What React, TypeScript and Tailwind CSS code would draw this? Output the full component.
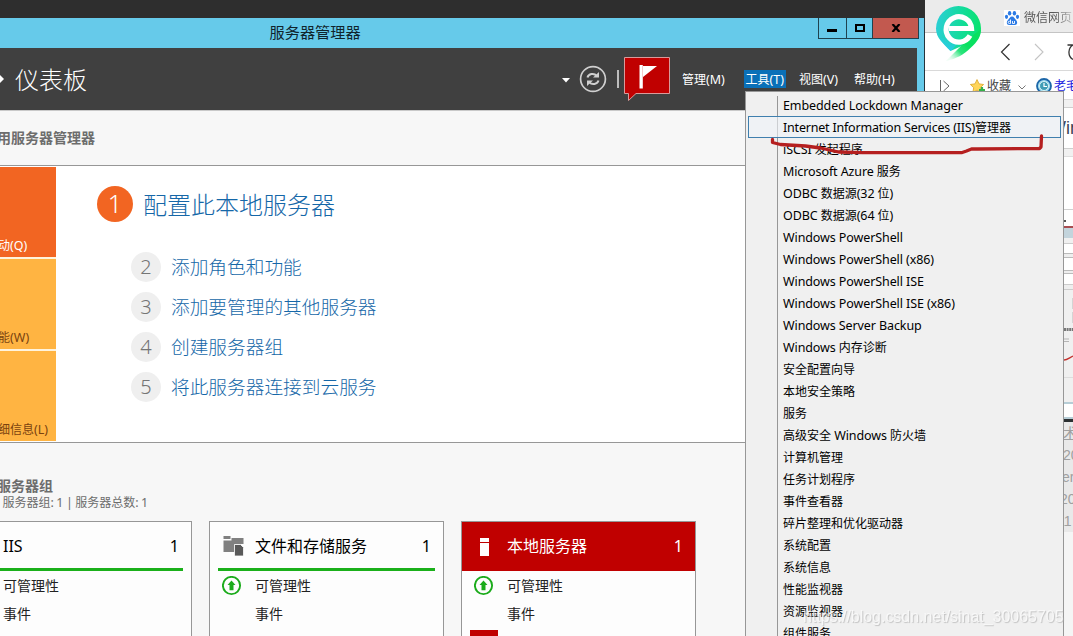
import clsx from 'clsx'

interface MenuEntry { label: string; active?: boolean }

const tools: MenuEntry[] = [
  { label: 'Embedded Lockdown Manager' },
  { label: 'Internet Information Services (IIS)管理器', active: true },
  { label: 'iSCSI 发起程序' },
  { label: 'Microsoft Azure 服务' },
  { label: 'ODBC 数据源(32 位)' },
  { label: 'ODBC 数据源(64 位)' },
  { label: 'Windows PowerShell' },
  { label: 'Windows PowerShell (x86)' },
  { label: 'Windows PowerShell ISE' },
  { label: 'Windows PowerShell ISE (x86)' },
  { label: 'Windows Server Backup' },
  { label: 'Windows 内存诊断' },
  { label: '安全配置向导' },
  { label: '本地安全策略' },
  { label: '服务' },
  { label: '高级安全 Windows 防火墙' },
  { label: '计算机管理' },
  { label: '任务计划程序' },
  { label: '事件查看器' },
  { label: '碎片整理和优化驱动器' },
  { label: '系统配置' },
  { label: '系统信息' },
  { label: '性能监视器' },
  { label: '资源监视器' },
  { label: '组件服务' },
]

const steps = ['添加角色和功能', '添加要管理的其他服务器', '创建服务器组', '将此服务器连接到云服务']

// latin runs are drawn a little larger than the 12px chinese glyphs
function Mixed({ text }: { text: string }) {
  return (
    <>
      {text.split(/([\u4e00-\u9fff]+)/).map((part, i) =>
        i % 2 ? <span key={i} className="text-[12px] tracking-normal">{part}</span> : <span key={i} className="text-[12.5px]">{part}</span>
      )}
    </>
  )
}

function TitleBar() {
  return (
    <div className="h-[30px] bg-[#66caea] flex shrink-0 border-r border-[#25343c]">
      <div className="w-[818px] pl-[269.5px] pt-[3px] text-[15.2px] leading-[23px] text-[#10242c]">服务器管理器</div>
      <div className="flex h-[21px] border-b border-l border-[#1f4350] text-black">
        <div className="w-[28px] border-r border-[#1f4350]"><div className="ml-[8px] mt-[11px] w-[10px] h-[3px] bg-black" /></div>
        <div className="w-[26px] border-r border-[#1f4350]"><div className="ml-[8px] mt-[6px] w-[10px] h-[8px] border-2 border-black" /></div>
        <div className="w-[46px] border-r border-[#1f4350] bg-[#c2594f]">
          <svg width="10" height="8" viewBox="0 0 10 8" className="ml-[18px] mt-[6px]"><path d="M1.5 0 8.5 8M8.5 0 1.5 8" stroke="#000" strokeWidth="2.2" /></svg>
        </div>
      </div>
    </div>
  )
}

function Header() {
  return (
    <div className="h-[63px] bg-[#404040] border-b border-[#c9c9c9] flex text-white w-[917px]">
      <svg width="4" height="8" viewBox="0 0 4 8" className="mt-[27px] shrink-0"><path d="M0 0 4 4 0 8z" fill="#fff" /></svg>
      <div className="ml-[11px] w-[547px] shrink-0 text-[24px] leading-[36px] mt-[14px] font-light">仪表板</div>
      <svg width="8" height="5" viewBox="0 0 8 5" className="mt-[30px] shrink-0"><path d="M0 0h8L4 4.5z" fill="#fff" /></svg>
      <svg width="28" height="28" viewBox="0 0 28 28" className="ml-[8.5px] mt-[17px] shrink-0" fill="none" stroke="#cfcfcf">
        <circle cx="14" cy="14" r="12.4" strokeWidth="1.7" />
        <path d="M8.5 12.5c1-3.6 6.3-5 9.3-1.6M19.5 15.5c-1 3.6-6.3 5-9.3 1.6" strokeWidth="2" />
        <path d="M20 7v5.5h-6zM8 21v-5.5h6z" fill="#cfcfcf" stroke="none" />
      </svg>
      <div className="ml-[10.5px] mt-[22px] w-[2px] h-[18px] bg-[#bdbdbd] shrink-0" />
      <svg width="47" height="46" viewBox="0 0 47 46" className="ml-[5px] mt-[9px] shrink-0">
        <path d="M.5.5h45v36H12L4.5 43.5V36.5H.5z" fill="#c00000" stroke="#d99a9a" />
        <path d="M15.500 8h3.300v23.500h-3.300zM19 9h14L19 20z" fill="#fff" />
      </svg>
      <div className="flex mt-[22px] ml-[11px] h-[18px] leading-[16px] whitespace-nowrap">
        <div className="w-[62px]"><Mixed text="管理(M)" /></div>
        <div className="w-[42px] pl-[1.5px] bg-[#0a70b8]"><Mixed text="工具(T)" /></div>
        <div className="w-[55px] ml-[13px]"><Mixed text="视图(V)" /></div>
        <div><Mixed text="帮助(H)" /></div>
      </div>
    </div>
  )
}

function QuickTile({ label, className }: { label: string; className: string }) {
  return (
    <div className={clsx('h-[90px] w-[58px] -ml-[2px] flex items-end leading-[18px] pb-[2px] whitespace-nowrap', className)}>
      <div><Mixed text={label} /></div>
    </div>
  )
}

function Welcome() {
  return (
    <div className="h-[278px] bg-white border-y border-[#979797] flex">
      <div className="w-[56px] mt-px flex flex-col gap-[2px] bg-[#fff3dc] h-[274px]">
        <QuickTile label="动(Q)" className="bg-[#f26522] text-white" />
        <QuickTile label="能(W)" className="bg-[#ffb442] text-[#7a4310]" />
        <QuickTile label="细信息(L)" className="bg-[#ffb442] text-[#7a4310]" />
      </div>
      <div className="pl-[41px] pt-[20px] text-[#1567a8] font-light">
        <div className="flex items-center">
          <div className="size-[36px] rounded-full bg-[#f26522] text-white text-[25px] leading-[35px] text-center">1</div>
          <div className="ml-[10px] pt-px text-[24px] leading-[35px]">配置此本地服务器</div>
        </div>
        <div className="mt-[30px] ml-[34px] flex flex-col gap-[10px]">
          {steps.map((s, i) => (
            <div key={s} className="flex items-center h-[30px]">
              <div className="size-[30px] rounded-full bg-[#efefef] text-[#757575] text-[20px] leading-[30px] text-center">{i + 2}</div>
              <div className="ml-[10px] text-[18.7px]">{s}</div>
            </div>
          ))}
        </div>
      </div>
    </div>
  )
}

function UpIcon() {
  return (
    <svg width="20" height="20" viewBox="0 0 20 20">
      <circle cx="9.5" cy="9.5" r="8.6" fill="none" stroke="#1bab1b" strokeWidth="1.9" />
      <path d="M9.5 4.500 13.500 9h-2v5.200h-4V9h-2z" fill="#1bab1b" />
    </svg>
  )
}

function ServerCard({ title, icon, alert }: { title: string; icon?: React.ReactNode; alert?: boolean }) {
  return (
    <div className="w-[235px] h-[130px] shrink-0 border border-[#979797] bg-[#fdfdfd] text-[#222]">
      <div className={clsx('h-[49px] flex items-center text-[16px]', alert ? 'bg-[#c00000] text-white' : 'text-black')}>
        <div className="w-[45px] pl-[13px]">{icon}</div>
        <div className="flex-1 pb-px">{title}</div>
        <div className="pr-[12px] pb-px">1</div>
      </div>
      {!alert && <div className="h-[3px] mx-[8px] bg-[#1bb01b] -mt-[3px]" />}
      <div className="flex text-[14px] leading-[28px] pt-px">
        <div className="w-[45px] pl-[12px] pt-[4px]"><UpIcon /></div>
        <div>
          <div>可管理性</div>
          <div>事件</div>
        </div>
      </div>
      {alert && <div className="ml-[8px] mt-[2px] w-[28px] h-[20px] bg-[#c00000]" />}
    </div>
  )
}

function ServerManager() {
  return (
    <div className="w-[925px] shrink-0 flex flex-col h-full">
      <div className="h-[18px] bg-[#2e2e2e] shrink-0" />
      <TitleBar />
      <div className="flex-1 bg-[#66caea] border-r border-[#25343c]">
        <div className="w-[917px] bg-[#f7f7f7] h-full">
          <Header />
          <div className="h-[54px] pt-[16px] text-[14px] leading-[22px] font-bold text-[#6d6d6d]"><div className="-ml-[3px]">用服务器管理器</div></div>
          <Welcome />
          <div className="pt-[33px] text-[#6d6d6d] h-[78px]">
            <div className="-ml-[3px] text-[14px] leading-[20px] font-bold">服务器组</div>
            <div className="pl-[2.5px] -mt-px leading-[13px] tracking-[-0.2px] [word-spacing:-0.4px]"><Mixed text="服务器组: 1 | 服务器总数: 1" /></div>
          </div>
          <div className="-ml-[43px] flex gap-[17px]">
            <ServerCard title="IIS" />
            <ServerCard
              title="文件和存储服务"
              icon={
                <svg width="22" height="22" viewBox="0 0 22 22" className="-mt-[2px]">
                  <path d="M.5 1h7v3h-7zM.5 5.500h8V3h12v6h-9v8h-11z" fill="#808080" />
                  <path d="M11.5 9.5h6l3 3v8.5h-9z" fill="#595959" stroke="#fdfdfd" strokeWidth=".8" />
                </svg>
              }
            />
            <ServerCard
              title="本地服务器"
              alert
              icon={<svg width="9" height="18" viewBox="0 0 9 18" className="ml-[5px]"><path d="M0 0h9v4H0zM0 5h9v13H0z" fill="#fff" /></svg>}
            />
          </div>
        </div>
      </div>
    </div>
  )
}

function Browser() {
  return (
    <div className="w-[148px] shrink-0 bg-white flex flex-col relative overflow-hidden">
      <div className="h-[33px] bg-[#ebebeb] border-b border-[#c4c4c4] flex items-center pl-[79px] pt-[3px] shrink-0 whitespace-nowrap">
        <svg width="16" height="16" viewBox="0 0 16 16" className="shrink-0">
          <path d="M0 0h16v16H0z" fill="#fff" />
          <g fill="#2c7be5">
            <ellipse cx="5.6" cy="3.2" rx="1.7" ry="2.3" /><ellipse cx="10.4" cy="3.2" rx="1.7" ry="2.3" />
            <ellipse cx="2.5" cy="6.8" rx="1.6" ry="2.1" /><ellipse cx="13.5" cy="6.8" rx="1.6" ry="2.1" />
            <path d="M8 6.5c2 0 2.5 2 4 3.5 1.8 1.7 1.5 5-1 5H5c-2.5 0-2.8-3.3-1-5 1.5-1.500 2-3.500 4-3.500z" />
          </g>
          <path d="M6.500 9.500v4H5.300a1 1 0 0 1 0-2.200h1.200M8.500 11v2.500h2V11" stroke="#fff" strokeWidth=".9" fill="none" />
        </svg>
        <span className="ml-[4px] text-[12px] text-transparent bg-clip-text bg-linear-to-r from-[#555] from-60% to-[#bbb]">微信网页</span>
      </div>
      <div className="h-[38px] border-b border-[#d9d9d9] flex items-center pl-[75px] shrink-0">
        <svg width="73" height="20" viewBox="0 0 73 20" fill="none">
          <path d="M9.500 2 1.500 10l8 8" stroke="#333" strokeWidth="1.200" />
          <path d="M35 2l8 8-8 8" stroke="#c4c4c4" strokeWidth="1.100" />
          <path d="M74 2.500a8.500 8.500 0 0 0-1 15M67.500 3h5" stroke="#333" strokeWidth="1.300" />
        </svg>
      </div>
      <div className="h-[29px] flex items-center pl-[15px] pt-[2px] text-[12px] whitespace-nowrap border-b border-[#dcdcdc] shrink-0">
        <svg width="10" height="12" viewBox="0 0 10 12" fill="none" stroke="#666" className="shrink-0"><path d="M.5 0v12M3.500 1 9 6l-5.500 5" /></svg>
        <svg width="16" height="15" viewBox="0 0 16 15" className="ml-[20px] shrink-0">
          <path d="M7 .6l2 4.300 4.600.6-3.400 3.200.9 4.700L7 11.100l-4.100 2.300.8-4.700L.4 5.500 5 4.900z" fill="#ffd65a" stroke="#e2b23c" />
          <path d="M12 8v6M9 11h6" stroke="#35b14a" strokeWidth="2.200" />
        </svg>
        <span className="ml-[1px] text-[#444]">收藏</span>
        <svg width="8" height="5" viewBox="0 0 8 5" className="ml-[7px] mt-[3px] shrink-0" fill="none" stroke="#777"><path d="M.5.5 4 4 7.500.5" /></svg>
        <svg width="16" height="16" viewBox="0 0 16 16" className="ml-[10px] shrink-0">
          <circle cx="8" cy="8" r="7" fill="#9fdcf0" stroke="#1c66a8" strokeWidth="1.800" />
          <circle cx="8" cy="8" r="4.500" fill="#3f9db5" stroke="#d9f3f5" /><path d="M8 5v3.500h3" stroke="#fff" strokeWidth="1.200" fill="none" />
        </svg>
        <span className="ml-[2px] text-[#1a1ae0]">老毛</span>
      </div>
      <div className="pl-[139px] flex-1 flex flex-col whitespace-nowrap overflow-hidden">
        <div className="h-[8px] bg-[#f1f1f1] border-b border-[#cfcfcf] shrink-0" />
        <div className="h-[41px] border-b border-[#cfcfcf] text-[18px] leading-[41px] text-[#3c4456] -ml-[15px] shrink-0 font-['Liberation_Sans',sans-serif]">Win</div>
        <div className="h-[8px] bg-[#f1f1f1] border-b border-[#dedede] shrink-0" />
        <div className="h-[53px] border-b border-[#d0d0d0] shrink-0" />
        <div className="h-[16px] shrink-0 flex items-end"><div className="w-[2px] h-[2px] bg-[#555] mb-[4px]" /></div>
        <div className="h-[12px] bg-[#c3d4dc] border-t-2 border-[#a84c50] shrink-0" />
        <div className="h-[6px] bg-[#f0f0f0] border-b border-[#ccc] shrink-0" />
        <div className="h-[9px] shrink-0" />
        <div className="h-[5px] bg-[#eee] border-y border-[#bbb] shrink-0" />
        <div className="h-[12px] shrink-0" />
        <div className="h-[4px] bg-[#eee] border-y border-[#bbb] shrink-0" />
        <div className="h-[10px] shrink-0" />
        <div className="h-[6px] bg-[#eee] border-y border-[#ccc] shrink-0" />
        <div className="h-[38px] bg-[#f0f0f0] pl-[8px] pt-[8px] flex flex-col gap-[3px] shrink-0"><div className="h-[11px] bg-[#d4d4d4]" /><div className="h-[11px] bg-[#d4d4d4]" /></div>
        <div className="h-[74px] bg-[#f0f0f0] shrink-0">
          <svg width="9" height="54" viewBox="0 0 9 54" fill="none">
            <path d="M0 1.500h9" stroke="#777" strokeWidth="3" strokeDasharray="2 .6" />
            <path d="M0 11h5M0 13.500h5" stroke="#b5b5b5" /><path d="M0 32c3 0 5-2 9-4" stroke="#c4312d" strokeWidth="1.300" />
            <path d="M0 49.500h9" stroke="#ddd" />
          </svg>
        </div>
        <div className="h-[17px] bg-white border-y-2 border-[#b6cdd6] shrink-0" />
        <div className="h-[3px] bg-[#2c3032] shrink-0" />
        <div className="h-[110px] bg-[#e9e9e9] text-[#a0a0a0] text-[14px] leading-[22px] shrink-0 font-['Liberation_Sans','Noto_Sans_CJK_SC',sans-serif]">
          <div className="-ml-[1px] underline">术</div>
          <div className="-ml-[1px]">20</div>
          <div className="-ml-[2px]">er</div>
          <div className="-ml-[4px]">20</div>
          <div className="-ml-[7px]">11</div>
        </div>
        <div className="flex-1 bg-[#f5f5f5]" />
      </div>
      <svg width="48" height="57" viewBox="0 0 48 57" className="absolute left-[10px] top-[5px]">
        <defs>
          <linearGradient id="pin" x1="0" y1=".5" x2="1" y2=".6"><stop offset="0" stopColor="#2bcfd4" /><stop offset=".5" stopColor="#14db9f" /><stop offset="1" stopColor="#08e36a" /></linearGradient>
          <linearGradient id="drop" x1=".7" y1="0" x2=".35" y2="1"><stop offset="0" stopColor="#2cc8f0" stopOpacity="0" /><stop offset="1" stopColor="#2cc8f0" /></linearGradient>
          <linearGradient id="tail" gradientUnits="userSpaceOnUse" x1="32" y1="40" x2="17" y2="56"><stop offset="0" stopColor="#08e060" /><stop offset=".45" stopColor="#2be47c" /><stop offset="1" stopColor="#b4f5d2" stopOpacity=".25" /></linearGradient>
        </defs>
        <path d="M23.5 1A22.5 22.5 0 0 0 1 23.5C1 33 8 38 15.5 46l18-8 9.5-4a22.5 22.5 0 0 0 3-10.5A22.5 22.5 0 0 0 23.5 1z" fill="url(#pin)" />
        <path d="M4 33c3 5 7 8 11.500 13l12-12z" fill="url(#drop)" />
        <path d="M46 24c0 8-4 13-10 18.500-8 7.500-14 11-25 13.500L32 35z" fill="url(#tail)" />
        <path d="M14 23.500h22.500A12.700 12.700 0 1 0 35 30.500" fill="none" stroke="#fff" strokeWidth="5.200" />
      </svg>
    </div>
  )
}

function ToolsMenu() {
  return (
    <div className="absolute left-[745px] top-[91px] w-[319px] h-[545px] bg-[#f0f0f0] border border-b-0 border-[#979797] pt-[2px] text-black overflow-hidden">
      <div className="absolute left-[31px] top-[4px] bottom-0 w-px bg-[#979797]" />
      {tools.map(t => (
        <div key={t.label} className={clsx('relative h-[22px] mx-[2px] pl-[34px] leading-[18px] border whitespace-nowrap', t.active ? 'border-[#3f7fae] bg-[#eff4f8]/60 tracking-[-0.2px]' : 'border-transparent tracking-[-0.1px]')}>
          <Mixed text={t.label} />
        </div>
      ))}
    </div>
  )
}

export default function App() {
  return (
    <div className="relative w-[1073px] h-[636px] overflow-hidden flex font-['Noto_Sans','Noto_Sans_CJK_SC',sans-serif]">
      <ServerManager />
      <Browser />
      <ToolsMenu />
      <svg width="280" height="26" viewBox="0 0 280 26" className="absolute left-[768px] top-[131px]" fill="none" stroke="#b51f1f" strokeWidth="3.300" strokeLinecap="round" strokeLinejoin="round">
        <path d="M4.500 8.500v3l8 2 25 1.500 15 2 18 4 24 .7h99l5-1.700 5-2h6l62-.5 1.500-1.500.5-11" />
      </svg>
      <div className="absolute left-[803px] top-[607px] text-[15.95px] leading-[20px] text-white/90 font-['Liberation_Sans',sans-serif] [text-shadow:1px_1px_1px_#aaa] whitespace-nowrap opacity-65">https://blog.csdn.net/sinat_30065705</div>
    </div>
  )
}
